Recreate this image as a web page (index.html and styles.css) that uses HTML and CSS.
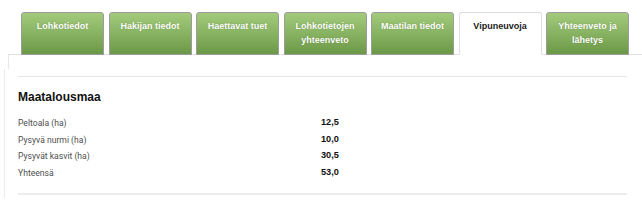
FILE: index.html
```html
<!DOCTYPE html>
<html lang="fi">
<head>
<meta charset="utf-8">
<title>Vipuneuvoja</title>
<link rel="stylesheet" href="styles.css">
</head>
<body>
<nav class="tabs">
  <a class="tab">Lohkotiedot</a>
  <a class="tab">Hakijan tiedot</a>
  <a class="tab">Haettavat tuet</a>
  <a class="tab">Lohkotietojen<br>yhteenveto</a>
  <a class="tab">Maatilan tiedot</a>
  <a class="tab active">Vipuneuvoja</a>
  <a class="tab">Yhteenveto ja<br>lähetys</a>
</nav>
<div class="panel-top"></div>
<section class="content">
  <div class="rule"></div>
  <h2 class="title">Maatalousmaa</h2>
  <div class="rows">
    <div class="row"><span class="label">Peltoala (ha)</span><span class="value">12,5</span></div>
    <div class="row"><span class="label">Pysyvä nurmi (ha)</span><span class="value">10,0</span></div>
    <div class="row"><span class="label">Pysyvät kasvit (ha)</span><span class="value">30,5</span></div>
    <div class="row"><span class="label">Yhteensä</span><span class="value">53,0</span></div>
  </div>
  <div class="rule bottom"></div>
</section>
</body>
</html>
```
FILE: styles.css
```css
html, body {
  margin: 0;
  padding: 0;
  background: #ffffff;
}
body {
  font-family: "Liberation Sans", Arial, sans-serif;
  width: 642px;
  height: 223px;
  overflow: hidden;
}
.tabs {
  display: flex;
  gap: 4.5px;
  padding-left: 21px;
  margin-top: 12px;
  height: 43px;
  position: relative;
  z-index: 1;
}
.tab {
  box-sizing: border-box;
  width: 83px;
  height: 43px;
  padding-top: 7px;
  border: 1px solid #9c9c9c;
  border-radius: 3px 3px 0 0;
  background: linear-gradient(to bottom, #a3ca7b 0%, #8ab565 45%, #6b9846 100%);
  color: #ffffff;
  font-weight: bold;
  font-size: 9px;
  line-height: 13.5px;
  text-align: center;
  text-shadow: 0 0 1px rgba(60, 90, 30, 0.5);
}
.tab.active {
  background: #ffffff;
  border-color: #dedede;
  border-bottom-color: #ffffff;
  color: #222222;
  text-shadow: none;
}
.panel-top {
  margin-left: 8px;
  margin-top: -1px;
  height: 14px;
  border-top: 1px solid #e2e2e2;
  border-left: 1px solid #e8e8e8;
}
.content {
  margin-left: 4px;
  border-left: 1px solid #ececec;
  padding: 7px 15px 3px 13px;
}
.rule {
  height: 0;
  border-top: 1px solid #e6e6e6;
}
.rule.bottom {
  margin-top: 12px;
  border-top: 2px solid #ececec;
}
.title {
  margin: 13px 0 0 0;
  font-size: 12px;
  line-height: 14px;
  font-weight: bold;
  color: #111111;
}
.rows {
  margin-top: 11px;
}
.row {
  display: grid;
  grid-template-columns: 303px auto;
  height: 16.5px;
  align-items: center;
}
.label {
  font-family: "Roboto", "Liberation Sans", sans-serif;
  font-size: 8.6px;
  color: #4f4f4f;
}
.value {
  font-size: 9.2px;
  font-weight: bold;
  color: #111111;
  position: relative;
  top: -1px;
}
```
